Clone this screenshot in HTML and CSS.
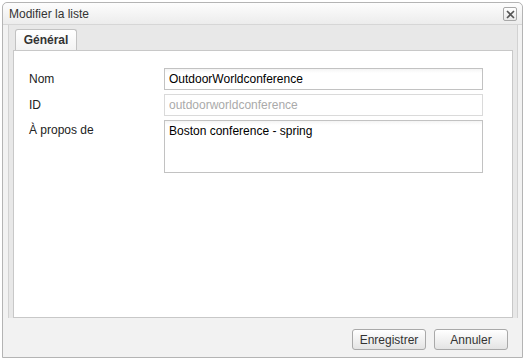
FILE: index.html
```html
<!DOCTYPE html>
<html lang="fr">
<head>
    <meta charset="UTF-8">
    <meta name="viewport" content="width=device-width, initial-scale=1.0">
    <link rel="stylesheet" href="styles.css">
    <title>Modifier la liste</title>
</head>
<body>
    <div class="dialog">
        <div class="titlebar">
            <span class="title">Modifier la liste</span>
            <button class="close" title="Fermer">
                <svg width="9" height="9" viewBox="0 0 9 9">
                    <path d="M1 1 L8 8 M8 1 L1 8" stroke="#555" stroke-width="1.6" fill="none"/>
                </svg>
            </button>
        </div>
        <div class="frame">
            <div class="tabs">
                <div class="tab">Général</div>
            </div>
            <div class="panel">
                <div class="form">
                    <label class="label" for="nom">Nom</label>
                    <input id="nom" class="field" type="text" value="OutdoorWorldconference">
                    <label class="label" for="id">ID</label>
                    <input id="id" class="field" type="text" value="outdoorworldconference" disabled>
                    <label class="label" for="about">À propos de</label>
                    <textarea id="about" class="field area">Boston conference - spring</textarea>
                </div>
            </div>
        </div>
        <div class="footer">
            <button class="btn">Enregistrer</button>
            <button class="btn">Annuler</button>
        </div>
    </div>
</body>
</html>
```

FILE: styles.css
```css
body {
    margin: 0;
    padding: 0;
    background-color: #fff;
    font-family: "Liberation Sans", Arial, sans-serif;
    font-size: 12px;
    color: #222;
}

.dialog {
    margin: 2px 0 0 2px;
    width: 519px;
    height: 354px;
    border: 1px solid #b4b4b4;
    border-radius: 5px 5px 0 0;
    background-color: #f2f2f2;
    display: flex;
    flex-direction: column;
}

.titlebar {
    height: 21px;
    padding: 0 5px 0 6px;
    display: flex;
    align-items: center;
    justify-content: space-between;
    background: linear-gradient(#fdfdfd, #ececec);
    border-bottom: 1px solid #d6d6d6;
    border-radius: 5px 5px 0 0;
}

.title {
    font-size: 12px;
    color: #333;
}

.close {
    width: 14px;
    height: 14px;
    padding: 0;
    border: 1px solid #a8a8a8;
    border-radius: 2px;
    background: linear-gradient(#fff, #e9e9e9);
    display: flex;
    align-items: center;
    justify-content: center;
    margin-top: 1px;
}

.frame {
    flex: 1;
    margin: 0 4px 0 5px;
    padding: 4px 4px 0 4px;
    background-color: #e8e8e8;
    border-left: 1px solid #d2d2d2;
    border-right: 1px solid #d2d2d2;
    display: flex;
    flex-direction: column;
}

.tabs {
    display: flex;
    padding-left: 2px;
}

.tab {
    width: 60px;
    height: 20px;
    line-height: 20px;
    text-align: center;
    font-weight: bold;
    color: #333;
    border: 1px solid #c2c2c2;
    border-bottom: none;
    border-radius: 3px 3px 0 0;
    background: linear-gradient(#fff, #f3f3f3);
}

.panel {
    flex: 1;
    background-color: #fff;
    border: 1px solid #c8c8c8;
    padding: 17px 15px 0 15px;
}

.form {
    display: grid;
    grid-template-columns: 135px 319px;
    row-gap: 4px;
    align-items: center;
}

.label {
    color: #222;
    font-size: 12px;
}

.form .label:nth-of-type(3) {
    align-self: start;
    padding-top: 3px;
}

.field {
    box-sizing: border-box;
    width: 319px;
    height: 22px;
    margin: 0;
    padding: 2px 4px;
    border: 1px solid #c2c2c2;
    background: linear-gradient(#f4f4f4, #fff 4px);
    font-family: "Liberation Sans", Arial, sans-serif;
    font-size: 12px;
    color: #000;
}

.field:disabled {
    color: #aaa;
    border-color: #dadada;
    background: #fff;
}

.area {
    height: 53px;
    resize: none;
    padding-top: 3px;
}

.footer {
    height: 39px;
    display: flex;
    justify-content: flex-end;
    align-items: flex-start;
    gap: 8px;
    padding: 11px 14px 0 0;
    box-sizing: border-box;
}

.btn {
    width: 74px;
    height: 21px;
    padding: 0;
    border: 1px solid #a9a9a9;
    border-radius: 3px;
    background: linear-gradient(#fff, #e4e4e4);
    font-family: "Liberation Sans", Arial, sans-serif;
    font-size: 12px;
    color: #333;
}
```
